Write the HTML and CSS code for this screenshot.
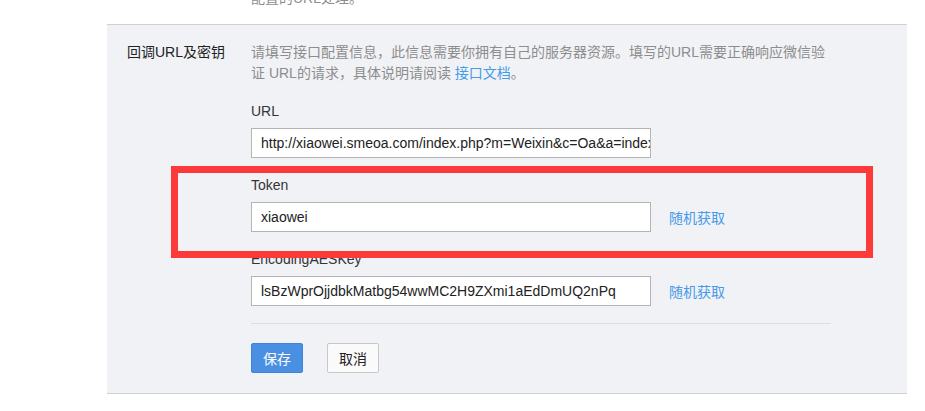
FILE: index.html
```html
<!DOCTYPE html>
<html lang="zh-CN">
<head>
    <meta charset="UTF-8">
    <meta name="viewport" content="width=device-width, initial-scale=1.0">
    <title>服务器配置</title>
    <link rel="stylesheet" href="styles.css">
</head>
<body>

    <div class="page">
        <!-- 上一段说明，只露出底部 -->
        <div class="prev-block">
            <p class="prev-text">配置的URL处理。</p>
        </div>

        <div class="panel">
            <div class="panel-label">回调URL及密钥</div>
            <div class="panel-body">
                <p class="desc">请填写接口配置信息，此信息需要你拥有自己的服务器资源。填写的URL需要正确响应微信验证 URL的请求，具体说明请阅读 <a href="#">接口文档</a>。</p>

                <div class="field">
                    <label for="url">URL</label>
                    <div class="field-row">
                        <input type="text" id="url" value="http://xiaowei.smeoa.com/index.php?m=Weixin&amp;c=Oa&amp;a=index">
                    </div>
                </div>

                <div class="field">
                    <label for="token">Token</label>
                    <div class="field-row">
                        <input type="text" id="token" value="xiaowei">
                        <a href="#" class="random-link">随机获取</a>
                    </div>
                </div>

                <div class="field">
                    <label for="aeskey">EncodingAESKey</label>
                    <div class="field-row">
                        <input type="text" id="aeskey" value="lsBzWprOjjdbkMatbg54wwMC2H9ZXmi1aEdDmUQ2nPq">
                        <a href="#" class="random-link">随机获取</a>
                    </div>
                </div>

                <div class="divider"></div>

                <div class="actions">
                    <button class="btn btn-primary">保存</button>
                    <button class="btn btn-default">取消</button>
                </div>
            </div>

            <!-- 红色标注框 -->
            <div class="highlight"></div>
        </div>
    </div>

</body>
</html>
```

FILE: styles.css
```css
body {
    margin: 0;
    background-color: #fff;
    font-family: "Liberation Sans", "Noto Sans CJK SC", sans-serif;
    font-size: 14px;
    color: #222;
}

.page {
    width: 800px;
    margin-left: 107px;
}

.prev-block {
    height: 24px;
    overflow: hidden;
}

.prev-text {
    margin: -12px 0 0 144px;
    line-height: 21px;
    color: #8d8d8d;
}

.panel {
    position: relative;
    display: flex;
    padding: 17px 0 20px 20px;
    background-color: #f1f2f6;
    border-top: 1px solid #cfcfd4;
    border-bottom: 1px solid #cfcfd4;
}

.panel-label {
    width: 124px;
    flex-shrink: 0;
    line-height: 21px;
    color: #222;
}

.panel-body {
    flex: 1;
}

.desc {
    width: 580px;
    margin: 0 0 17px 0;
    line-height: 21px;
    color: #8d8d8d;
}

.desc a {
    color: #459ae9;
    text-decoration: none;
}

.field {
    margin-bottom: 17px;
}

.field label {
    display: block;
    line-height: 20px;
    margin-bottom: 7px;
    color: #353535;
}

.field-row {
    display: flex;
    align-items: center;
}

.field input {
    box-sizing: border-box;
    width: 400px;
    height: 30px;
    padding: 0 0 0 9px;
    border: 1px solid #b3b3b3;
    background-color: #fff;
    font-family: "Liberation Sans", "Noto Sans CJK SC", sans-serif;
    font-size: 14px;
    color: #222;
    outline: none;
}

.random-link {
    margin-left: 18px;
    color: #459ae9;
    text-decoration: none;
}

.divider {
    width: 580px;
    height: 1px;
    margin-top: 4px;
    background-color: #dcdde1;
}

.actions {
    display: flex;
    gap: 24px;
    margin-top: 19px;
}

.btn {
    box-sizing: border-box;
    height: 30px;
    width: 52px;
    padding: 0;
    border-radius: 2px;
    font-family: "Liberation Sans", "Noto Sans CJK SC", sans-serif;
    font-size: 14px;
    cursor: pointer;
}

.btn-primary {
    background-color: #4a90e2;
    border: 1px solid #3f84d6;
    color: #fff;
}

.btn-default {
    background-color: #fafafa;
    border: 1px solid #c8c8c8;
    color: #222;
}

.highlight {
    position: absolute;
    left: 64px;
    top: 141px;
    width: 688px;
    height: 78px;
    border: 7px solid #fc3a3a;
    pointer-events: none;
}
```
